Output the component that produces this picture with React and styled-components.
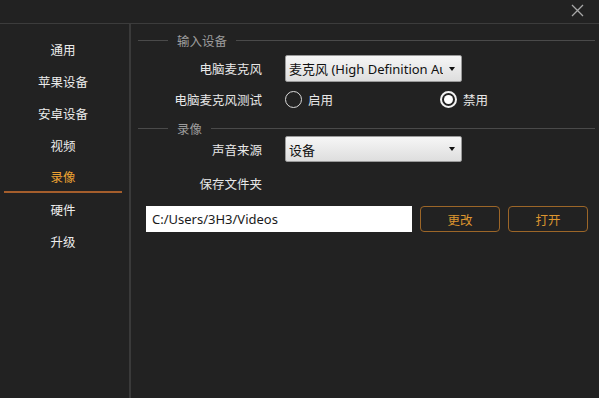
import React from 'react'
import styled, { createGlobalStyle } from 'styled-components'

const GlobalStyle = createGlobalStyle`
  * { box-sizing: border-box; }
  html, body { margin: 0; padding: 0; background: #222222; }
  body {
    font-family: "Noto Sans", "Noto Sans CJK SC", sans-serif;
    color: #e6e6e6;
  }
`

const navItems = ['通用', '苹果设备', '安卓设备', '视频', '录像', '硬件', '升级']

const App = () => {
  return <Window>
    <GlobalStyle/>
    <TitleBar>
      <CloseButton aria-label='close'>
        <svg width='13' height='13' viewBox='0 0 13 13'>
          <path d='M1 1 L12 12 M12 1 L1 12' stroke='#a8a8a8' strokeWidth='1.3' fill='none'/>
        </svg>
      </CloseButton>
    </TitleBar>
    <Body>
      {/* Left navigation */}
      <Sidebar>
        {navItems.map((item)=>{
          return <NavItem key={item} $active={item === '录像'}>{item}</NavItem>
        })}
      </Sidebar>
      {/* Settings */}
      <Content>
        <SectionHeader>
          <Rule $w='30px'/>
          <SectionTitle>输入设备</SectionTitle>
          <Rule/>
        </SectionHeader>
        <Row $mt='7px' $h='27px'>
          <Label>电脑麦克风</Label>
          <Select>
            <SelectText>麦克风 (High Definition Audio)</SelectText>
            <Arrow/>
          </Select>
        </Row>
        <Row $mt='2px' $h='30px'>
          <Label>电脑麦克风测试</Label>
          <RadioGroup>
            <RadioOption>
              <Radio/>
              <span>启用</span>
            </RadioOption>
            <RadioOption>
              <Radio $checked/>
              <span>禁用</span>
            </RadioOption>
          </RadioGroup>
        </Row>
        <SectionHeader $mt='6px'>
          <Rule $w='30px'/>
          <SectionTitle>录像</SectionTitle>
          <Rule/>
        </SectionHeader>
        <Row $mt='0px' $h='26px'>
          <Label>声音来源</Label>
          <Select>
            <SelectText>设备</SelectText>
            <Arrow/>
          </Select>
        </Row>
        <Row $mt='8px' $h='26px'>
          <Label>保存文件夹</Label>
        </Row>
        <PathRow>
          <PathInput>C:/Users/3H3/Videos</PathInput>
          <OutlineButton>更改</OutlineButton>
          <OutlineButton>打开</OutlineButton>
        </PathRow>
      </Content>
    </Body>
  </Window>
}

const Window = styled.div`
  width: 599px;
  height: 398px;
  display: flex;
  flex-direction: column;
  background: #222222;
  overflow: hidden;
`

const TitleBar = styled.div`
  height: 24px;
  flex-shrink: 0;
  display: flex;
  justify-content: flex-end;
  align-items: flex-start;
  border-bottom: 1px solid #3c3c3c;
`

const CloseButton = styled.div`
  width: 13px;
  height: 13px;
  margin: 4px 15px 0 0;
  display: flex;
`

const Body = styled.div`
  flex: 1;
  display: flex;
`

const Sidebar = styled.nav`
  width: 131px;
  flex-shrink: 0;
  padding-top: 9px;
  border-right: 2px solid #3a3a3a;
  display: flex;
  flex-direction: column;
`

const NavItem = styled.div`
  height: 32px;
  margin: 0 7px 0 4px;
  display: flex;
  align-items: center;
  justify-content: center;
  font-family: "Noto Sans CJK SC", sans-serif;
  font-size: 12.5px;
  color: ${(p)=>p.$active ? '#eda232' : '#ececec'};
  border-bottom: 2px solid ${(p)=>p.$active ? '#a55e2c' : 'transparent'};
  padding-top: ${(p)=>p.$active ? '1px' : '2px'};
`

const Content = styled.div`
  flex: 1;
  padding: 8px 4px 0 7px;
  display: flex;
  flex-direction: column;
`

const SectionHeader = styled.div`
  height: 16px;
  margin-top: ${(p)=>p.$mt || '0'};
  display: flex;
  align-items: center;
  gap: 9px;
`

const Rule = styled.div`
  height: 1px;
  background: #4a4a4a;
  flex: ${(p)=>p.$w ? `0 0 ${p.$w}` : '1'};
`

const SectionTitle = styled.span`
  font-family: "Noto Sans CJK SC", sans-serif;
  font-size: 12.5px;
  color: #9c9c9c;
`

const Row = styled.div`
  height: ${(p)=>p.$h};
  margin-top: ${(p)=>p.$mt};
  display: grid;
  grid-template-columns: 124px 177px;
  column-gap: 23px;
  align-items: center;
`

const Label = styled.div`
  text-align: right;
  font-family: "Noto Sans CJK SC", sans-serif;
  font-size: 12.5px;
  color: #e8e8e8;
`

const Select = styled.div`
  height: 100%;
  display: flex;
  align-items: center;
  padding: 0 6px 0 3px;
  border: 1px solid #9a9a9a;
  border-radius: 2px;
  background: linear-gradient(#f6f6f6, #dedede);
  color: #111;
`

const SelectText = styled.span`
  flex: 1;
  overflow: hidden;
  white-space: nowrap;
  font-family: "Noto Sans", "Noto Sans CJK SC", sans-serif;
  font-size: 13px;
`

const Arrow = styled.span`
  width: 0;
  height: 0;
  margin-left: 6px;
  border-left: 3.5px solid transparent;
  border-right: 3.5px solid transparent;
  border-top: 4px solid #111;
`

const RadioGroup = styled.div`
  display: grid;
  grid-template-columns: 155px auto;
  width: 240px;
`

const RadioOption = styled.label`
  display: flex;
  align-items: center;
  gap: 6px;
  font-family: "Noto Sans CJK SC", sans-serif;
  font-size: 12.5px;
  color: #e8e8e8;
`

const Radio = styled.span`
  width: 17px;
  height: 17px;
  border-radius: 50%;
  border: ${(p)=>p.$checked ? '2px solid #f2f2f2' : '1.5px solid #dadada'};
  display: flex;
  align-items: center;
  justify-content: center;
  &::after {
    content: '';
    width: 9px;
    height: 9px;
    border-radius: 50%;
    background: ${(p)=>p.$checked ? '#ffffff' : 'transparent'};
  }
`

const PathRow = styled.div`
  margin-top: 10px;
  padding-left: 8px;
  height: 26px;
  display: flex;
  gap: 8px;
`

const PathInput = styled.div`
  width: 266px;
  background: #ffffff;
  color: #1a1a1a;
  display: flex;
  align-items: center;
  padding-left: 6px;
  font-family: "Noto Sans", sans-serif;
  font-size: 13px;
`

const OutlineButton = styled.div`
  width: 80px;
  border: 1px solid #9c6628;
  border-radius: 4px;
  display: flex;
  align-items: center;
  justify-content: center;
  font-family: "Noto Sans CJK SC", sans-serif;
  font-size: 12.5px;
  color: #dc952f;
`

export default App
